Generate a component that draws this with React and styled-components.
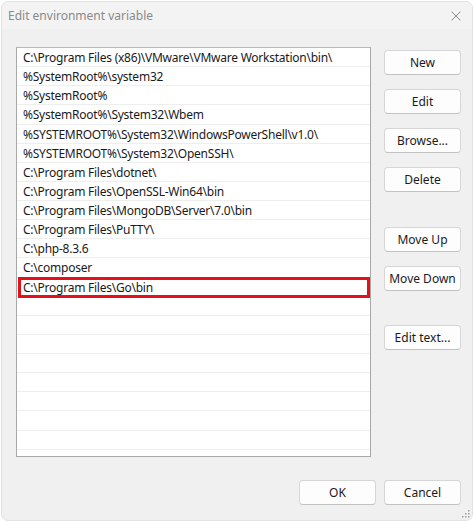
import React from "react";
import styled, { createGlobalStyle } from "styled-components";

const Global = createGlobalStyle`
  html, body { margin: 0; padding: 0; background: #ffffff; }
  body { font-family: "Noto Sans", "Open Sans", sans-serif; }
  * { box-sizing: border-box; }
`;

const Window = styled.div`
  width: 472px;
  height: 520px;
  margin: 1px;
  border: 1px solid #e2e2e2;
  border-radius: 7px;
  background: #f0f0f0;
  display: flex;
  flex-direction: column;
  overflow: hidden;
  position: relative;
`;

const TitleBar = styled.div`
  height: 29px;
  display: flex;
  align-items: center;
  justify-content: space-between;
  padding: 0 9px 0 6px;
  background: #f3f3f3;
`;

const Title = styled.span`
  font-size: 12px;
  color: #8a8a8a;
`;

const CloseIcon = styled.svg`
  width: 10px;
  height: 10px;
  margin-right: 2px;
`;

const Body = styled.div`
  flex: 1;
  display: flex;
  flex-direction: column;
  padding: 18px 11px 15px 14px;
`;

const Main = styled.div`
  display: flex;
  gap: 13px;
`;

const List = styled.div`
  width: 356px;
  height: 410px;
  background: #ffffff;
  border: 1px solid #a8a8a8;
  border-top-color: #b8b8b8;
  overflow: hidden;
  position: relative;
`;

const Row = styled.div`
  height: 19.13px;
  border-bottom: 1px solid #eeeeee;
  display: flex;
  align-items: center;
  padding-left: 6px;
  padding-top: 1px;
  font-size: 12px;
  color: #1a1a1a;
  white-space: nowrap;
  letter-spacing: -0.24px;
  position: relative;
`;

const Highlight = styled.div`
  position: absolute;
  left: 1px;
  right: 0px;
  top: -1px;
  bottom: -2px;
  border: 3px solid #e6101a;
  pointer-events: none;
`;

const ButtonColumn = styled.div`
  display: flex;
  flex-direction: column;
  padding-top: 2.5px;
`;

const Button = styled.button`
  width: 77px;
  height: 25px;
  margin-top: ${(p) => p.$gap}px;
  background: #fdfdfd;
  border: 1px solid #d6d6d6;
  border-bottom-color: #c2c2c2;
  border-radius: 4px;
  font-family: "Noto Sans", "Open Sans", sans-serif;
  font-size: 12px;
  color: #1b1b1b;
  padding: 0;
  display: flex;
  align-items: center;
  justify-content: center;
`;

const Footer = styled.div`
  margin-top: 23px;
  display: flex;
  justify-content: flex-end;
  gap: 8px;
`;

const Grip = styled.svg`
  position: absolute;
  right: 2px;
  bottom: 2px;
  width: 8px;
  height: 8px;
`;

const entries = [
  "C:\\Program Files (x86)\\VMware\\VMware Workstation\\bin\\",
  "%SystemRoot%\\system32",
  "%SystemRoot%",
  "%SystemRoot%\\System32\\Wbem",
  "%SYSTEMROOT%\\System32\\WindowsPowerShell\\v1.0\\",
  "%SYSTEMROOT%\\System32\\OpenSSH\\",
  "C:\\Program Files\\dotnet\\",
  "C:\\Program Files\\OpenSSL-Win64\\bin",
  "C:\\Program Files\\MongoDB\\Server\\7.0\\bin",
  "C:\\Program Files\\PuTTY\\",
  "C:\\php-8.3.6",
  "C:\\composer",
  "C:\\Program Files\\Go\\bin",
];

const rows = [...entries, ...Array(9).fill("")];

const buttons = [
  { label: "New", gap: 0 },
  { label: "Edit", gap: 14.3 },
  { label: "Browse...", gap: 14.3 },
  { label: "Delete", gap: 14.3 },
  { label: "Move Up", gap: 34.3 },
  { label: "Move Down", gap: 14.3 },
  { label: "Edit text...", gap: 34.3 },
];

export default function App() {
  return (
    <>
      <Global />
      <Window>
        <TitleBar>
          <Title>Edit environment variable</Title>
          <CloseIcon viewBox="0 0 10 10">
            <path d="M0.5 0.5 L9.5 9.5 M9.5 0.5 L0.5 9.5" stroke="#8d8d8d" strokeWidth="1" fill="none" />
          </CloseIcon>
        </TitleBar>
        <Body>
          <Main>
            <List>
              {rows.map((r, i) => (
                <Row key={i}>
                  {r}
                  {i === 12 && <Highlight />}
                </Row>
              ))}
            </List>
            <ButtonColumn>
              {buttons.map((b) => (
                <Button key={b.label} $gap={b.gap}>
                  {b.label}
                </Button>
              ))}
            </ButtonColumn>
          </Main>
          <Footer>
            <Button $gap={0}>OK</Button>
            <Button $gap={0}>Cancel</Button>
          </Footer>
        </Body>
        <Grip viewBox="0 0 8 8">
          {[
            [6, 0], [6, 3], [3, 3], [6, 6], [3, 6], [0, 6],
          ].map(([x, y], i) => (
            <rect key={i} x={x} y={y} width="1.5" height="1.5" fill="#a0a0a0" />
          ))}
        </Grip>
      </Window>
    </>
  );
}
